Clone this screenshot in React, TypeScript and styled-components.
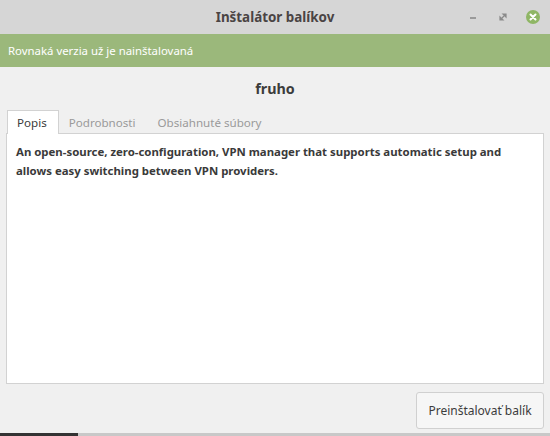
import React, { useState } from "react";
import styled, { createGlobalStyle } from "styled-components";

const GlobalStyle = createGlobalStyle`
  html, body {
    margin: 0;
    padding: 0;
    background: #f0f0f0;
  }
  body {
    font-family: "Noto Sans", "DejaVu Sans", sans-serif;
    overflow: hidden;
  }
`;

const Window = styled.div`
  width: 550px;
  height: 436px;
  display: flex;
  flex-direction: column;
  background: #f0f0f0;
`;

const TitleBar = styled.div`
  height: 34px;
  flex: none;
  position: relative;
  display: flex;
  align-items: center;
  justify-content: center;
  background: #d6d6d6;
`;

const Title = styled.div`
  font-size: 13.4px;
  font-weight: bold;
  color: #4a4444;
`;

const Controls = styled.div`
  position: absolute;
  right: 9px;
  top: 0;
  height: 34px;
  display: flex;
  align-items: center;
  gap: 14px;
`;

const Ctl = styled.div`
  width: 16px;
  height: 16px;
  display: flex;
  align-items: center;
  justify-content: center;
`;

const InfoBar = styled.div`
  height: 33px;
  flex: none;
  display: flex;
  align-items: center;
  padding: 0 8px;
  background: #9bb87b;
  color: #ffffff;
  font-size: 11.4px;
`;

const Body = styled.div`
  flex: 1;
  display: flex;
  flex-direction: column;
  padding: 0 6px;
`;

const PkgName = styled.div`
  height: 43px;
  display: flex;
  align-items: center;
  justify-content: center;
  font-size: 14.3px;
  font-weight: bold;
  color: #3c3c3c;
`;

const TabRow = styled.div`
  display: flex;
  height: 24px;
  padding-left: 1px;
  position: relative;
  z-index: 1;
`;

const Tab = styled.div<{ $active?: boolean }>`
  display: flex;
  align-items: center;
  padding: 0 11px 0 9px;
  font-size: 11.6px;
  color: ${(p) => (p.$active ? "#3c3c3c" : "#9a9a9a")};
  background: ${(p) => (p.$active ? "#ffffff" : "transparent")};
  border: 1px solid ${(p) => (p.$active ? "#d2d2d2" : "transparent")};
  border-bottom: none;
  height: 24px;
  box-sizing: border-box;
  cursor: default;
`;

const Panel = styled.div`
  margin-top: -1px;
  height: 251px;
  box-sizing: border-box;
  background: #ffffff;
  border: 1px solid #d2d2d2;
  padding: 8px 6px 8px 9px;
  font-size: 11.4px;
  font-weight: bold;
  line-height: 19px;
  color: #3a3a3a;
`;

const Footer = styled.div`
  display: flex;
  justify-content: flex-end;
  padding-top: 8px;
`;

const Button = styled.button`
  width: 128px;
  height: 37px;
  border: 1px solid #d0d0d0;
  border-radius: 3px;
  background: #f6f6f6;
  font-family: inherit;
  font-size: 12px;
  color: #3c3c3c;
`;

const Progress = styled.div`
  margin-top: auto;
  height: 3px;
  background: #c8c8c8;
  display: flex;
`;

const ProgressFill = styled.div`
  background: #333333;
  height: 100%;
`;

export default function App() {
  const [tab, setTab] = useState(0);
  const tabs = ["Popis", "Podrobnosti", "Obsiahnuté súbory"];
  return (
    <Window>
      <GlobalStyle />
      <TitleBar>
        <Title>Inštalátor balíkov</Title>
        <Controls>
          <Ctl>
            <svg width="16" height="16" viewBox="0 0 16 16">
              <rect x="5" y="8" width="6" height="2" fill="#9a9a9a" />
            </svg>
          </Ctl>
          <Ctl>
            <svg width="16" height="16" viewBox="0 0 16 16">
              <path d="M8 5h3v3z M5 8v3h3z M7 9l2-2" stroke="#8a8a8a" strokeWidth="1.2" fill="#8a8a8a" />
            </svg>
          </Ctl>
          <Ctl>
            <svg width="16" height="16" viewBox="0 0 16 16">
              <circle cx="8" cy="8" r="7" fill="#8fb665" />
              <path d="M5.5 5.5l5 5M10.5 5.5l-5 5" stroke="#ffffff" strokeWidth="2" strokeLinecap="round" />
            </svg>
          </Ctl>
        </Controls>
      </TitleBar>
      <InfoBar>Rovnaká verzia už je nainštalovaná</InfoBar>
      <Body>
        <PkgName>fruho</PkgName>
        <TabRow>
          {tabs.map((t, i) => (
            <Tab key={t} $active={i === tab} onClick={() => setTab(i)}>
              {t}
            </Tab>
          ))}
        </TabRow>
        <Panel>
          An open-source, zero-configuration, VPN manager that supports automatic setup and allows easy switching between VPN providers.
        </Panel>
        <Footer>
          <Button>Preinštalovať balík</Button>
        </Footer>
      </Body>
      <Progress>
        <ProgressFill style={{ width: "78px" }} />
      </Progress>
    </Window>
  );
}
